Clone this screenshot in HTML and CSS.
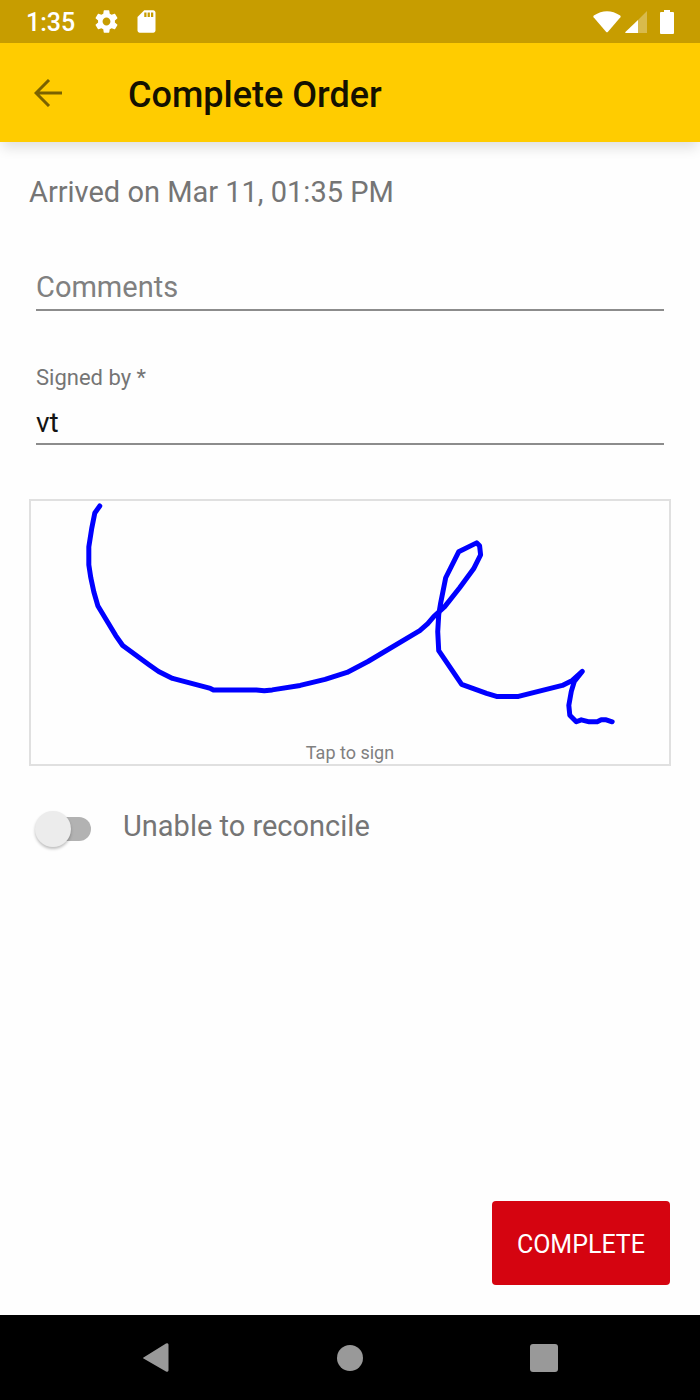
FILE: index.html
```html
<!DOCTYPE html>
<html lang="en">
<head>
<meta charset="utf-8">
<meta name="viewport" content="width=device-width, initial-scale=1">
<title>Complete Order</title>
<link rel="stylesheet" href="styles.css">
</head>
<body>
<div class="status-bar">
  <span class="clock">1:35</span>
  <svg class="status-icon" viewBox="0 0 24 24" aria-hidden="true"><path d="M19.43 12.98c.04-.32.07-.64.07-.98s-.03-.66-.07-.98l2.11-1.65c.19-.15.24-.42.12-.64l-2-3.46c-.12-.22-.39-.3-.61-.22l-2.49 1c-.52-.4-1.08-.73-1.69-.98l-.38-2.65C14.46 2.18 14.25 2 14 2h-4c-.25 0-.46.18-.49.42l-.38 2.65c-.61.25-1.17.59-1.69.98l-2.49-1c-.23-.09-.49 0-.61.22l-2 3.46c-.13.22-.07.49.12.64l2.11 1.65c-.04.32-.07.65-.07.98s.03.66.07.98l-2.11 1.65c-.19.15-.24.42-.12.64l2 3.46c.12.22.39.3.61.22l2.49-1c.52.4 1.08.73 1.69.98l.38 2.65c.03.24.24.42.49.42h4c.25 0 .46-.18.49-.42l.38-2.65c.61-.25 1.17-.59 1.69-.98l2.49 1c.23.09.49 0 .61-.22l2-3.46c.12-.22.07-.49-.12-.64l-2.11-1.65zM12 15.5c-1.93 0-3.5-1.57-3.5-3.5s1.57-3.5 3.5-3.5 3.5 1.57 3.5 3.5-1.57 3.5-3.5 3.5z"/></svg>
  <svg class="status-icon" viewBox="0 0 24 24" aria-hidden="true"><path d="M18 2h-8L4 8v12c0 1.100.9 2 2 2h12c1.100 0 2-.9 2-2V4c0-1.100-.9-2-2-2zm-6 6h-2V4h2v4zm3 0h-2V4h2v4zm3 0h-2V4h2v4z"/></svg>
  <div class="status-right">
    <svg class="wifi" viewBox="0 0 28 22" aria-hidden="true"><path d="M.8 4.600Q14-4 27.200 4.600q.8.700.2 1.600L15 20.800q-1 1-2 0L.6 6.200q-.6-.9.200-1.600z"/></svg>
    <svg class="signal" viewBox="0 0 22 22" aria-hidden="true"><path class="dim" d="M13 9l9-9v22h-9z"/><path d="M13 9v13H.8q-1-.2-.4-1z"/></svg>
    <svg class="battery" viewBox="0 0 14 24" aria-hidden="true"><path d="M4 0h6v2h3q1 0 1 1v20q0 1-1 1H1q-1 0-1-1V3q0-1 1-1h3z"/></svg>
  </div>
</div>

<header class="app-bar">
  <button class="back" type="button" aria-label="Back">
    <svg viewBox="0 0 28 28" aria-hidden="true"><path d="M28 14H2M15 1L2 14l13 13"/></svg>
  </button>
  <h1 class="title">Complete Order</h1>
</header>

<main class="content">
  <p class="arrived">Arrived on Mar 11, 01:35 PM</p>
  <form class="form">
    <div class="field comments">
      <input class="input" type="text" placeholder="Comments" aria-label="Comments">
    </div>
    <div class="field signed">
      <label class="label" for="signed-by">Signed by *</label>
      <input class="input" id="signed-by" type="text" value="vt" required>
    </div>
    <button class="signature" type="button">
      <svg class="ink" viewBox="30 501 640 240" role="img" aria-label="Signature">
        <path d="M99 506L94 513L91 528L88 547V565L90 578L93 592L97 606L115 636L122 646L148 665L158 672L172 679L210 689L213 690.500H256L264 691.300L272 690.500L300 686L325 680L347 673L368 662L420 631L428 624L434 617L445 607L460 588L474 569L481 555L480 546L477 543L459 552L446 578L441 603L439 615L438 632L439 651L462 685L487 694L497 697H519L535 693L563 686L573 681L583 672L575 682L572 692L569.500 706L570.500 716L577 722.500L582 720.500L590 722.500H598L602 720.500H607L613 722.500"/>
      </svg>
      <span class="hint">Tap to sign</span>
    </button>
    <label class="toggle">
      <input class="switch" type="checkbox" role="switch">
      <span>Unable to reconcile</span>
    </label>
    <button class="complete" type="submit">COMPLETE</button>
  </form>
</main>

<nav class="nav-bar" aria-label="System">
  <button class="nav-button" type="button" aria-label="Back"><svg viewBox="0 0 30 30"><path d="M27.500 1.500v26q-.5 2-2.500 1L2.500 15.600q-1-.6 0-1.200L25 .5q2-.8 2.500 1z"/></svg></button>
  <button class="nav-button" type="button" aria-label="Home"><svg viewBox="0 0 30 30"><circle cx="15" cy="15" r="13"/></svg></button>
  <button class="nav-button" type="button" aria-label="Recent apps"><svg viewBox="0 0 30 30"><rect x="1" y="1" width="28" height="28" rx="3"/></svg></button>
</nav>
</body>
</html>
```

FILE: styles.css
```css
* {
  box-sizing: border-box;
}

body {
  margin: 0;
  min-height: 100vh;
  display: flex;
  flex-direction: column;
  background: #fefefe;
  color: #757575;
  font-family: Roboto, sans-serif;
  font-size: 29px;
}

button,
input {
  font: inherit;
  border: 0;
  padding: 0;
  margin: 0;
  background: none;
  border-radius: 0;
}

svg {
  display: block;
}

.status-bar {
  display: flex;
  align-items: center;
  height: 43px;
  padding: 0 26px;
  background: #c79d00;
  color: #fff;
  fill: #fff;
}

.clock {
  width: 67px;
  padding-top: 2px;
  font-size: 25px;
  font-weight: 500;
  line-height: 40px;
}

.status-icon {
  width: 27px;
  height: 27px;
  margin-right: 13px;
}

.status-right {
  display: flex;
  align-items: center;
  margin-left: auto;
}

.wifi {
  width: 28px;
  height: 22px;
  margin-right: 4px;
}

.signal {
  width: 22px;
  height: 22px;
  margin-right: 13px;
}

.dim {
  opacity: 0.3;
}

.battery {
  width: 14px;
  height: 24px;
}

.app-bar {
  display: flex;
  align-items: center;
  height: 99px;
  padding: 0 34px;
  background: #fc0;
  box-shadow: 0 8px 12px -2px rgba(0, 0, 0, 0.12);
}

.back {
  width: 30px;
  height: 30px;
  margin-right: 64px;
}

.back svg {
  width: 28px;
  height: 28px;
  fill: none;
  stroke: #7a6200;
  stroke-width: 3;
}

.title {
  margin: 0;
  padding-top: 4px;
  color: #141100;
  font-size: 36px;
  font-weight: 500;
  line-height: 42px;
}

.content {
  flex: 1;
  display: flex;
  flex-direction: column;
  padding: 30px 29px;
}

.arrived {
  margin: 0;
  line-height: 40px;
}

.form {
  flex: 1;
  display: flex;
  flex-direction: column;
}

.field {
  display: flex;
  flex-direction: column;
  margin: 0 7px;
}

.comments {
  margin-top: 50px;
}

.signed {
  margin-top: 52px;
}

.label {
  font-size: 22px;
  line-height: 30px;
}

.input {
  width: 100%;
  height: 49px;
  padding-top: 2px;
  border-bottom: 2px solid #8c8c8c;
  color: #141414;
  outline: 0;
}

.signed .input {
  height: 52px;
  padding-top: 8px;
  font-size: 28px;
}

.input::placeholder {
  color: #808080;
  opacity: 1;
}

.signature {
  display: flex;
  flex-direction: column;
  align-items: center;
  margin-top: 54px;
  border: 2px solid #e0e0e0;
}

.ink {
  width: 100%;
  fill: none;
  stroke: #00f;
  stroke-width: 5;
  stroke-linecap: round;
  stroke-linejoin: round;
}

.hint {
  padding-top: 2px;
  color: #808080;
  font-size: 18px;
  line-height: 22px;
}

.toggle {
  display: flex;
  align-items: center;
  margin-top: 40px;
  line-height: 40px;
}

.switch {
  appearance: none;
  display: flex;
  align-items: center;
  width: 53px;
  height: 24px;
  margin: 6px 32px 0 9px;
  border-radius: 12px;
  background: #b2b2b2;
}

.switch::before {
  content: "";
  flex: none;
  width: 36px;
  height: 36px;
  margin-left: -3px;
  border-radius: 50%;
  background: #ececec;
  box-shadow: 0 2px 3px rgba(0, 0, 0, 0.25);
}

.switch:checked {
  justify-content: flex-end;
}

.complete {
  align-self: flex-end;
  margin: auto 1px 0 0;
  padding: 24px 25px 20px;
  border-radius: 4px;
  background: #d50410;
  color: #fff;
  font-size: 25px;
  line-height: 40px;
}

.nav-bar {
  display: flex;
  justify-content: center;
  gap: 22%;
  height: 85px;
  background: #000;
}

.nav-button {
  display: flex;
  align-items: center;
  justify-content: center;
  width: 40px;
}

.nav-button svg {
  width: 30px;
  height: 30px;
  fill: #999;
}
```
